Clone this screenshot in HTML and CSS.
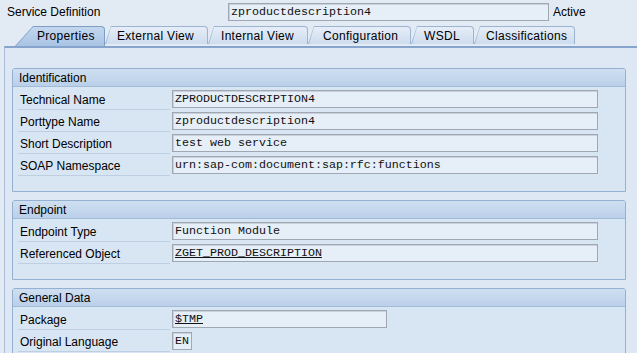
FILE: index.html
```
<!DOCTYPE html>
<html>
<head>
<meta charset="utf-8">
<link rel="stylesheet" href="styles.css">
</head>
<body>
<div class="topbar">
  <span class="top-label">Service Definition</span>
  <span class="field top-field">zproductdescription4</span>
  <span class="status">Active</span>
</div>
<div class="tabs">
  <div class="tab sel t1"><div class="tab-in">Properties</div></div>
  <div class="tab t2"><div class="tab-in">External View</div></div>
  <div class="tab t3"><div class="tab-in">Internal View</div></div>
  <div class="tab t4"><div class="tab-in">Configuration</div></div>
  <div class="tab t5"><div class="tab-in">WSDL</div></div>
  <div class="tab t6"><div class="tab-in">Classifications</div></div>
</div>
<div class="panel">
  <section class="group">
    <div class="group-head">Identification</div>
    <div class="group-body">
      <div class="row"><span class="label">Technical Name</span><span class="field wide">ZPRODUCTDESCRIPTION4</span></div>
      <div class="row"><span class="label">Porttype Name</span><span class="field wide">zproductdescription4</span></div>
      <div class="row"><span class="label">Short Description</span><span class="field wide">test web service</span></div>
      <div class="row"><span class="label">SOAP Namespace</span><span class="field wide">urn:sap-com:document:sap:rfc:functions</span></div>
    </div>
  </section>
  <section class="group">
    <div class="group-head">Endpoint</div>
    <div class="group-body">
      <div class="row"><span class="label">Endpoint Type</span><span class="field wide">Function Module</span></div>
      <div class="row"><span class="label">Referenced Object</span><span class="field wide link">ZGET_PROD_DESCRIPTION</span></div>
    </div>
  </section>
  <section class="group">
    <div class="group-head">General Data</div>
    <div class="group-body">
      <div class="row"><span class="label">Package</span><span class="field pkg link">$TMP</span></div>
      <div class="row"><span class="label">Original Language</span><span class="field lang">EN</span></div>
    </div>
  </section>
</div>
</body>
</html>
```
FILE: styles.css
```
html, body {
  margin: 0;
  padding: 0;
}
body {
  width: 637px;
  height: 353px;
  overflow: hidden;
  background: #e2eaf4;
  font-family: "Liberation Sans", Arial, sans-serif;
  font-size: 12px;
  color: #000;
}
.topbar {
  height: 24px;
  display: flex;
  align-items: flex-start;
}
.top-label {
  width: 221px;
  padding-left: 7px;
  line-height: 24px;
}
.field {
  box-sizing: border-box;
  height: 18px;
  background: #e6eef7;
  border: 1px solid #9fa8b2;
  box-shadow: inset 1px 1px 0 #c9d2dc;
  font-family: "Courier New", "Nimbus Mono PS", "Nimbus Mono L", "FreeMono", "Liberation Mono", monospace;
  font-size: 11.67px;
  line-height: 16px;
  padding-left: 2px;
  white-space: pre;
  overflow: hidden;
  color: #111;
}
.top-field {
  width: 321px;
  margin-top: 3px;
}
.status {
  margin-left: 4px;
  line-height: 24px;
}
.tabs {
  display: flex;
  align-items: flex-start;
  height: 22px;
  padding-top: 2px;
  box-sizing: border-box;
  padding-left: 15px;
}
.tab {
  --s: 6px;
  box-sizing: border-box;
  height: 18px;
  background: #9db4d1;
  border-top-right-radius: 4px;
  clip-path: polygon(var(--s) 0, 100% 0, 100% 100%, 0 100%);
  letter-spacing: 0.3px;
}
.tab.sel {
  --s: 18px;
  height: 20px;
  background: #7f9ec6;
}
.tab-in {
  box-sizing: border-box;
  height: 17px;
  margin: 1px 1px 0 1px;
  border-top-right-radius: 3px;
  background: linear-gradient(#e6eef8, #cddcee);
  clip-path: polygon(calc(var(--s) - 1px) 0, 100% 0, 100% 100%, 0 100%);
  line-height: 19px;
  white-space: nowrap;
  overflow: hidden;
}
.tab.sel .tab-in {
  height: 19px;
  background: linear-gradient(#c3d7ee, #a9c4e4);
}
.t1 { width: 90px; z-index: 9; }
.t2 { width: 103px; z-index: 8; }
.t3 { width: 100px; z-index: 7; }
.t4 { width: 103px; z-index: 6; }
.t5 { width: 63px; z-index: 5; }
.t6 { width: 101px; z-index: 4; }
.t1 .tab-in { padding-left: 21px; }
.t2 .tab-in { padding-left: 11px; }
.t3 .tab-in { padding-left: 12px; }
.t4 .tab-in { padding-left: 14px; }
.t5 .tab-in { padding-left: 12px; }
.t6 .tab-in { padding-left: 11px; }
.panel {
  box-sizing: border-box;
  margin-left: 4px;
  border-top: 2px solid #87a5cc;
  border-left: 1px solid #a9bdd7;
  background: #dde8f4;
  padding: 20px 11px 0 7px;
  height: 307px;
  overflow: hidden;
}
.group {
  border: 1px solid #94b0d3;
  border-radius: 3px 3px 0 0;
  background: #d8e5f3;
}
.group + .group {
  margin-top: 8px;
}
.group-head {
  height: 17px;
  line-height: 18px;
  padding-left: 6px;
  border-bottom: 1px solid #a2bbd9;
  background: linear-gradient(#cfdff1, #bad0e9);
  border-radius: 2px 2px 0 0;
}
.group-body {
  padding: 3px 0 13px 5px;
}
.row {
  display: flex;
  gap: 2px;
  height: 20px;
  margin-bottom: 2px;
}
.label {
  box-sizing: border-box;
  width: 152px;
  height: 20px;
  padding-left: 2px;
  line-height: 20px;
  border-bottom: 1px solid #bfcfe2;
}
.wide { width: 426px; }
.pkg { width: 215px; }
.lang { width: 20px; }
.link { text-decoration: underline; }
```
